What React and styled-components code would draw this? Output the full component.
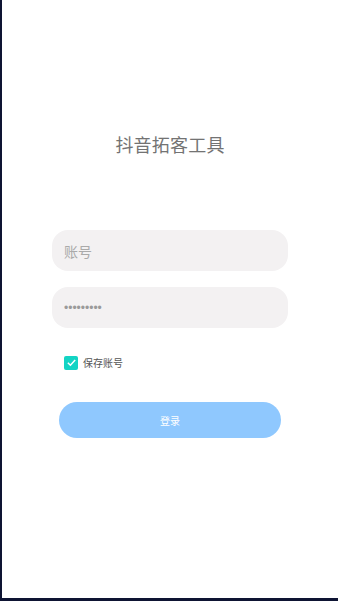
import React, { useState } from 'react'
import styled, { createGlobalStyle } from 'styled-components'

const GlobalStyle = createGlobalStyle`
  html, body {
    margin: 0;
    padding: 0;
    background: #0e1433;
  }
  * {
    box-sizing: border-box;
  }
`

const Page = styled.div`
  margin-left: 2px;
  height: 598px;
  background: #ffffff;
  display: flex;
  flex-direction: column;
  align-items: center;
  padding-top: 132px;
  font-family: 'Noto Sans CJK SC', 'Noto Sans', sans-serif;
`

const Title = styled.h1`
  margin: 0;
  font-size: 18px;
  line-height: 24px;
  font-weight: 400;
  color: #737373;
  letter-spacing: 0.2px;
`

const Form = styled.form`
  width: 236px;
  margin-top: 74px;
  display: flex;
  flex-direction: column;
`

const Field = styled.input`
  height: 41px;
  width: 100%;
  border: none;
  outline: none;
  border-radius: 16px;
  background: #f3f1f2;
  padding: 0 12px;
  font-family: ${p => (p.type === 'password' ? "'Liberation Sans', Arial, sans-serif" : 'inherit')};
  font-size: ${p => (p.type === 'password' ? '12px' : '14px')};
  color: #9a9a9a;
  margin-bottom: ${p => p.$gap || 0}px;

  &::placeholder {
    color: #aaaaaa;
  }
`

const CheckRow = styled.label`
  display: flex;
  align-items: center;
  gap: 5px;
  padding-left: 12px;
  margin-top: 27px;
  font-size: 10px;
  color: #555555;
  cursor: pointer;
`

const Box = styled.span`
  width: 14px;
  height: 14px;
  border-radius: 2px;
  background: ${p => (p.$on ? '#13d4c4' : '#ffffff')};
  border: ${p => (p.$on ? 'none' : '1px solid #cccccc')};
  display: flex;
  align-items: center;
  justify-content: center;
`

const LoginButton = styled.button`
  margin: 32px 7px 0;
  height: 36px;
  border: none;
  border-radius: 18px;
  background: #8fc8fe;
  color: #ffffff;
  font-family: inherit;
  font-size: 10px;
  cursor: pointer;
`

export default function App() {
  const [save, setSave] = useState(true)

  return (
    <>
      <GlobalStyle />
      <Page>
        <Title>抖音拓客工具</Title>
        <Form onSubmit={e => e.preventDefault()}>
          <Field type="text" placeholder="账号" $gap={16} />
          <Field type="password" defaultValue="123456789" />
          <CheckRow onClick={() => setSave(!save)}>
            <Box $on={save}>
              {save && (
                <svg width="11" height="11" viewBox="0 0 12 12">
                  <path d="M2 6.2 L4.8 9 L10 3.2" fill="none" stroke="#fff" strokeWidth="1.6" />
                </svg>
              )}
            </Box>
            <span>保存账号</span>
          </CheckRow>
          <LoginButton type="submit">登录</LoginButton>
        </Form>
      </Page>
    </>
  )
}
